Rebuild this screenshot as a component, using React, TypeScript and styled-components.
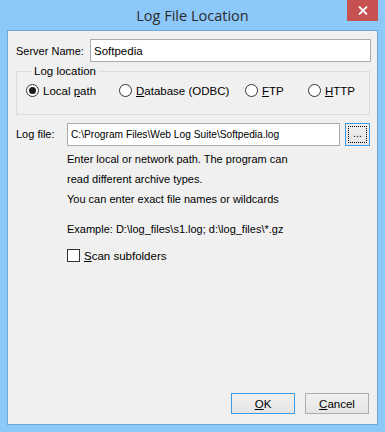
import React from "react";
import styled, { createGlobalStyle } from "styled-components";

const GlobalStyle = createGlobalStyle`
  html, body {
    margin: 0;
    padding: 0;
    background: #8ac6f8;
  }
  * {
    box-sizing: border-box;
  }
`;

export const Window = styled.div`
  width: 385px;
  height: 432px;
  background: #8cc8f9;
  display: flex;
  flex-direction: column;
  padding: 0 7px 7px 7px;
  font-family: "Liberation Sans", Arial, sans-serif;
  font-size: 11px;
  color: #000;
  overflow: hidden;
`;

export const TitleBar = styled.div`
  height: 30px;
  display: grid;
  grid-template-columns: 1fr auto 1fr;
  align-items: start;
  margin: 0 -7px;
`;

export const Title = styled.div`
  grid-column: 2;
  padding-top: 6px;
  font-family: "Open Sans", "Noto Sans", sans-serif;
  font-size: 14.5px;
  color: #2b2b2b;
`;

export const CloseButton = styled.div`
  grid-column: 3;
  justify-self: end;
  margin-right: 7px;
  width: 31px;
  height: 21px;
  background: #c75050;
  display: flex;
  align-items: center;
  justify-content: center;
`;

export const Client = styled.div`
  flex: 1;
  background: #f0f0f0;
  border: 1px solid #6ea6d6;
  display: flex;
  flex-direction: column;
  padding: 7px 8px 10px 8px;
`;

export const Row = styled.div<{ $top?: number }>`
  display: flex;
  align-items: center;
  margin-top: ${(p) => p.$top ?? 0}px;
`;

export const Label = styled.div<{ $width: number }>`
  width: ${(p) => p.$width}px;
  flex: none;
  font-size: 11px;
`;

export const TextBox = styled.div<{ $width: number }>`
  width: ${(p) => p.$width}px;
  height: 23px;
  background: #fff;
  border: 1px solid #ababab;
  padding: 0 3px;
  display: flex;
  align-items: center;
  font-size: 11.5px;
  white-space: nowrap;
  flex: none;
`;

export const Path = styled.span`
  font-size: 10.2px;
`;

export const Group = styled.fieldset`
  margin: 3px 0 0 0;
  width: 354px;
  border: 1px solid #dcdcdc;
  padding: 6px 0 0 9px;
  height: 50px;
  display: flex;
  align-items: flex-start;
`;

export const Legend = styled.legend`
  padding: 0 2px;
  margin-left: 6px;
  font-size: 11.5px;
  line-height: 13px;
`;

export const RadioItem = styled.label<{ $width: number }>`
  display: flex;
  align-items: center;
  width: ${(p) => p.$width}px;
  flex: none;
  font-size: 11.5px;
`;

export const RadioCircle = styled.span<{ $checked?: boolean }>`
  width: 13px;
  height: 13px;
  border-radius: 50%;
  border: 1px solid #333;
  background: #fff;
  margin-right: 4px;
  display: flex;
  align-items: center;
  justify-content: center;
  &::after {
    content: "";
    display: ${(p) => (p.$checked ? "block" : "none")};
    width: 7px;
    height: 7px;
    border-radius: 50%;
    background: #1a1a1a;
  }
`;

export const BrowseButton = styled.div`
  width: 25px;
  height: 23px;
  margin-left: 5px;
  margin-top: 1px;
  border: 1px solid #3c9be7;
  background: linear-gradient(#f0f0f0, #e5e5e5);
  padding: 2px;
  flex: none;
`;

export const FocusRect = styled.div`
  width: 100%;
  height: 100%;
  border: 1px dotted #000;
  display: flex;
  align-items: flex-end;
  justify-content: center;
  font-size: 11px;
  line-height: 11px;
  padding-bottom: 3px;
`;

export const Help = styled.div`
  margin-left: 51px;
  margin-top: 3px;
  display: flex;
  flex-direction: column;
  font-size: 11px;
  line-height: 20px;
`;

export const Gap = styled.div<{ $h: number }>`
  height: ${(p) => p.$h}px;
`;

export const CheckRow = styled.label`
  display: flex;
  align-items: center;
  margin-left: 51px;
  margin-top: 10px;
  font-size: 11.5px;
`;

export const CheckBox = styled.span`
  width: 13px;
  height: 13px;
  border: 1px solid #333;
  background: #fff;
  margin-right: 4px;
`;

export const Footer = styled.div`
  margin-top: auto;
  display: flex;
  justify-content: flex-end;
  gap: 10px;
`;

export const Button = styled.div<{ $primary?: boolean }>`
  width: 64px;
  height: 21px;
  border: 1px solid ${(p) => (p.$primary ? "#3c9be7" : "#adadad")};
  background: linear-gradient(#f0f0f0, #e5e5e5);
  display: flex;
  align-items: center;
  justify-content: center;
  font-size: 11.5px;
`;

const radios = [
  { key: "local", width: 93, pre: "Local ", u: "p", post: "ath", checked: true },
  { key: "db", width: 126, pre: "", u: "D", post: "atabase (ODBC)" },
  { key: "ftp", width: 63, pre: "", u: "F", post: "TP" },
  { key: "http", width: 60, pre: "", u: "H", post: "TTP" },
];

export default function App() {
  return (
    <>
      <GlobalStyle />
      <Window>
        <TitleBar>
          <Title>Log File Location</Title>
          <CloseButton>
            <svg width="10" height="9" viewBox="0 0 10 9">
              <path d="M1 0.5 L9 8.5 M9 0.5 L1 8.5" stroke="#fff" strokeWidth="1.8" />
            </svg>
          </CloseButton>
        </TitleBar>
        <Client>
          <Row $top={1}>
            <Label $width={74}>Server Name:</Label>
            <TextBox $width={281}>Softpedia</TextBox>
          </Row>
          <Group>
            <Legend>Log location</Legend>
            {radios.map((r) => (
              <RadioItem key={r.key} $width={r.width}>
                <RadioCircle $checked={r.checked} />
                <span>
                  {r.pre}
                  <u>{r.u}</u>
                  {r.post}
                </span>
              </RadioItem>
            ))}
          </Group>
          <Row $top={7}>
            <Label $width={51}>Log file:</Label>
            <TextBox $width={273}>
              <Path>C:\Program Files\Web Log Suite\Softpedia.log</Path>
            </TextBox>
            <BrowseButton>
              <FocusRect>...</FocusRect>
            </BrowseButton>
          </Row>
          <Help>
            <span>Enter local or network path. The program can</span>
            <span>read different archive types.</span>
            <span>You can enter exact file names or wildcards</span>
            <Gap $h={10} />
            <span>Example: D:\log_files\s1.log; d:\log_files\*.gz</span>
          </Help>
          <CheckRow>
            <CheckBox />
            <span>
              <u>S</u>can subfolders
            </span>
          </CheckRow>
          <Footer>
            <Button $primary>
              <span>
                <u>O</u>K
              </span>
            </Button>
            <Button>
              <span>
                <u>C</u>ancel
              </span>
            </Button>
          </Footer>
        </Client>
      </Window>
    </>
  );
}
